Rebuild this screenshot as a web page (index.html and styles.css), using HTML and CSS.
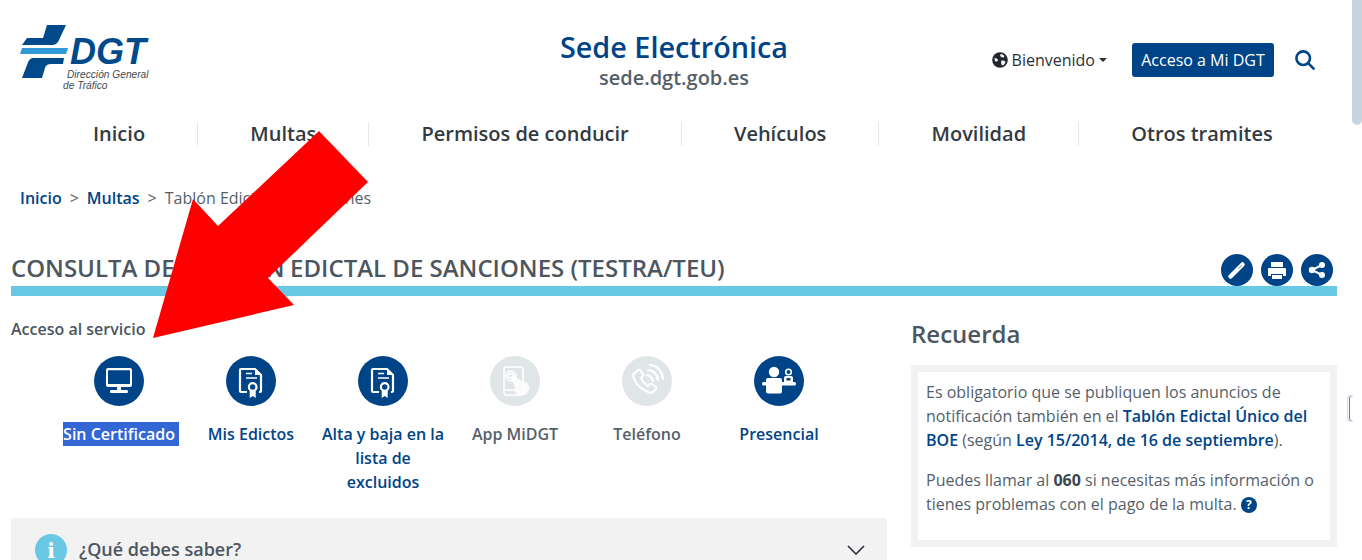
FILE: index.html
```html
<!DOCTYPE html>
<html lang="es">
<head>
<meta charset="utf-8">
<title>Sede Electrónica DGT</title>
<link rel="stylesheet" href="styles.css">
</head>
<body>
<div class="page">
  <header class="top">
    <a class="logo">
      <svg class="logo-mark" viewBox="0 0 50 56" width="50" height="56">
        <path fill="#004a8c" d="M7 13H23L27 0H46L39 15Q37 20 32 20H2Z"/>
        <path fill="#2f9ad6" d="M2 23H48L46 29H0Z"/>
        <path fill="#004a8c" d="M13 33H44L43 39H31Q26 39 25 43L22 53H2L7 40Q9 33 13 33Z"/>
      </svg>
      <span class="logo-text">
        <span class="logo-dgt">DGT</span>
        <span class="logo-sub">Dirección General</span>
        <span class="logo-sub logo-sub2">de Tráfico</span>
      </span>
    </a>
    <div class="site">
      <div class="site-name">Sede Electrónica</div>
      <div class="site-url">sede.dgt.gob.es</div>
    </div>
    <div class="tools">
      <svg class="globe" viewBox="0 0 16 16" width="16" height="16">
        <circle cx="8" cy="8" r="7.8" fill="#22262c"/>
        <path fill="#fff" d="M8 2.6 10.4 2.2 12.4 4 11.6 5.6 9.4 5.2 8.4 4ZM9.4 8.4l2.8.4L13.6 10l-1.8 3-2 .4-.7-2.6ZM2.4 6 4.8 6.4 6 8l-.8 1.6L3 9.2Z"/>
      </svg>
      <span class="welcome">Bienvenido</span><span class="caret"></span>
      <a class="access">Acceso a Mi DGT</a>
      <svg class="search" viewBox="0 0 20 20" width="20" height="20" fill="none" stroke="#004488" stroke-width="2.6" stroke-linecap="round">
        <circle cx="8.2" cy="8.2" r="6.8"/><path d="M13.2 13.2 18.6 18.6"/>
      </svg>
    </div>
  </header>

  <nav class="menu">
    <a class="menu-item">Inicio</a>
    <a class="menu-item">Multas</a>
    <a class="menu-item">Permisos de conducir</a>
    <a class="menu-item">Vehículos</a>
    <a class="menu-item">Movilidad</a>
    <a class="menu-item">Otros tramites</a>
  </nav>

  <div class="crumbs">
    <a class="crumb-link">Inicio</a><span class="crumb-sep">&gt;</span><a class="crumb-link">Multas</a><span class="crumb-sep">&gt;</span><span>Tablón Edictal de Sanciones</span>
  </div>

  <div class="title-row">
    <h1 class="title">Consulta de<span class="title-tight">l Tablón</span> Edictal de Sanciones (TESTRA/TEU)</h1>
    <div class="actions">
      <span class="action"><svg viewBox="0 0 32 32" width="32" height="32"><path d="M9.5 22.5 21.5 10.5" stroke="#fff" stroke-width="4.5" stroke-linecap="round"/><path d="M17 15 21 11" stroke="#7f9fc4" stroke-width="1"/></svg></span>
      <span class="action"><svg viewBox="0 0 32 32" width="32" height="32"><path fill="#fff" d="M10 8h12v5H10ZM8 14h16q1 0 1 1v7h-3v-2H10v2H7v-7q0-1 1-1ZM11 21h10v4H11Z"/></svg></span>
      <span class="action"><svg viewBox="0 0 32 32" width="32" height="32"><path d="M21 11 11 16 21 21" stroke="#fff" stroke-width="2" fill="none"/><circle cx="21" cy="11" r="3" fill="#fff"/><circle cx="11" cy="16" r="3.2" fill="#fff"/><circle cx="21" cy="21" r="3" fill="#fff"/></svg></span>
    </div>
  </div>

  <div class="columns">
    <main class="main">
      <div class="access-title">Acceso al servicio</div>
      <div class="services">
        <a class="service">
          <span class="disc"><svg viewBox="0 0 50 50" width="50" height="50"><path fill="#fff" fill-rule="evenodd" d="M14 12h22q2 0 2 2v15q0 2-2 2H14q-2 0-2-2V14q0-2 2-2Zm0 2.200v13.800h22V14.200ZM23 31h4v3h6q1 0 1 1.500t-1 1.500H17q-1 0-1-1.500t1-1.500h6Z"/></svg></span>
          <span class="service-label"><span class="selected">Sin Certificado</span></span>
        </a>
        <a class="service">
          <span class="disc"><svg viewBox="0 0 50 50" width="50" height="50"><use href="#cert"/></svg></span>
          <span class="service-label">Mis Edictos</span>
        </a>
        <a class="service">
          <span class="disc"><svg viewBox="0 0 50 50" width="50" height="50"><defs><g id="cert"><path fill="none" stroke="#fff" stroke-width="2.200" d="M21 36h-6q-1 0-1-1V14q0-1 1-1h14l6 6v16q0 1-1 1h-1"/><path fill="#fff" d="M29 13l6 6h-6Z"/><path fill="none" stroke="#fff" stroke-width="1.600" d="M20 17.500h6M20 22h11"/><circle cx="26.700" cy="31" r="3.800" fill="none" stroke="#fff" stroke-width="2.200"/><path fill="#fff" d="M23.700 35h6v7l-3-2-3 2Z"/></g></defs><use href="#cert"/></svg></span>
          <span class="service-label">Alta y baja en la lista de excluidos</span>
        </a>
        <a class="service off">
          <span class="disc"><svg viewBox="0 0 50 50" width="50" height="50"><g fill="none" stroke="#fff" stroke-width="1.500"><rect x="14" y="11" width="19" height="28" rx="2.500"/><path d="M14 34h13"/><circle cx="21" cy="20" r="5"/><circle cx="21" cy="20" r="2.500"/></g><path fill="#fff" opacity=".85" d="M21 20 24 19 30 24 37 27 40 32 36 39 29 40 24 35 25 32Z"/></svg></span>
          <span class="service-label">App MiDGT</span>
        </a>
        <a class="service off">
          <span class="disc"><svg viewBox="0 0 50 50" width="50" height="50"><g fill="none" stroke="#fff" stroke-linecap="round"><path stroke-width="2" d="M13 17l3-3q1-1 2 0l3 4q1 1 0 2l-2 2q2 5 7 8l2-2q1-1 2 0l4 3q1 1 0 2l-3 3q-2 1-5 0-12-5-15-16 0-2 2-3Z"/><path stroke-width="2.200" d="M25 19q5 1 6 6M26 14q9 1 10 10M28 9q11 1 13 14"/></g></svg></span>
          <span class="service-label">Teléfono</span>
        </a>
        <a class="service">
          <span class="disc"><svg viewBox="0 0 50 50" width="50" height="50"><g fill="#fff"><circle cx="20" cy="16" r="5.200"/><rect x="12" y="22" width="16" height="15.500" rx="2"/><rect x="8" y="26" width="34" height="3.500" rx="1.500"/><circle cx="34.500" cy="16" r="2.800" fill="none" stroke="#fff" stroke-width="1.600"/><path fill-rule="evenodd" d="M30 26v-4q0-2 2-2h5q2 0 2 2v4ZM32.500 22v2.500h4V22Z"/></g></svg></span>
          <span class="service-label">Presencial</span>
        </a>
      </div>
      <div class="accordion">
        <span class="info">i</span>
        <span class="accordion-title">¿Qué debes saber?</span>
        <svg class="chevron" viewBox="0 0 18 10" width="18" height="10" fill="none" stroke="#2b3038" stroke-width="1.600"><path d="M1 1 9 9 17 1"/></svg>
      </div>
    </main>
    <aside class="aside">
      <h2 class="aside-title">Recuerda</h2>
      <div class="note">
        <p class="note-p">Es obligatorio que se publiquen los anuncios de notificación también en el <b class="link">Tablón Edictal Único del BOE</b> (según <b class="link">Ley 15/2014, de 16 de septiembre</b>).</p>
        <p class="note-p">Puedes llamar al <b class="strong">060</b> si necesitas más información o tienes problemas con el pago de la multa. <span class="help">?</span></p>
      </div>
    </aside>
  </div>

  <svg class="arrow" viewBox="0 0 1362 560" width="1362" height="560"><polygon fill="#ff0000" points="153,338 193,199 218,226 319,131 368,182 268,278 294,305"/></svg>
  <div class="scroll-thumb"></div>
  <div class="side-tab"></div>
</div>
</body>
</html>
```
FILE: styles.css
```css
* { box-sizing: border-box; }
html, body { margin: 0; padding: 0; height: 560px; overflow: hidden; background: #fff; }
body { font-family: "Open Sans", "Noto Sans", sans-serif; font-size: 16px; line-height: 24px; color: #555f6a; }
.page { position: relative; width: 1362px; height: 560px; overflow: hidden; }

.top { display: grid; grid-template-columns: 1fr auto 1fr; align-items: start; width: 1348px; height: 118px; padding: 0 20px; }
.logo { display: flex; align-items: flex-start; margin-top: 25px; }
.logo-mark { flex: none; margin-right: -6px; }
.logo-text { display: block; width: 90px; height: 66px; }
.logo-dgt { display: block; margin: 12px 0 2px 6px; font: italic 700 36px/30px "Liberation Sans", sans-serif; color: #004a8c; }
.logo-sub { display: block; margin-left: 3px; font: italic 400 10.2px/11px "Liberation Sans", sans-serif; color: #444b52; white-space: nowrap; }
.logo-sub2 { margin-left: -1px; }

.site { margin-top: 29px; text-align: center; }
.site-name { font-size: 28.8px; line-height: 36px; font-weight: 600; color: #004488; }
.site-url { font-size: 20px; line-height: 26px; font-weight: 600; color: #555f6a; }

.tools { display: flex; align-items: center; justify-content: flex-end; margin-top: 43px; height: 34px; padding-right: 13px; color: #2b3038; }
.globe { margin-right: 4px; }
.caret { width: 0; height: 0; margin: 0 0 0 4px; border-style: solid; border-width: 4px 4px 0; border-color: #2b3038 transparent transparent; }
.access { display: block; margin: 0 21px 0 25px; width: 142px; height: 34px; line-height: 34px; text-align: center; background: #004488; color: #fff; border-radius: 3px; }

.menu { display: flex; align-items: center; height: 24px; margin: 4px 0 0 40.9px; }
.menu-item { padding: 0 52.1px; font-size: 20px; line-height: 24px; font-weight: 600; color: #333a42; border-right: 1px solid #e8e8e8; white-space: nowrap; }
.menu-item:last-child { border-right: 0; }

.crumbs { margin: 40px 0 0 20px; height: 24px; white-space: nowrap; }
.crumb-link { font-weight: 600; color: #004488; }
.crumb-sep { margin: 0 8px; }

.title-row { display: flex; justify-content: space-between; align-items: flex-end; height: 36px; margin: 40px 25px 0 11px; }
.title { margin: 0 0 2px; font-size: 24px; line-height: 32px; font-weight: 600; color: #4c5660; text-transform: uppercase; white-space: nowrap; }
.title-tight { letter-spacing: -0.75px; }
.actions { display: flex; gap: 8px; margin-right: 4px; }
.action { display: block; width: 32px; height: 32px; border-radius: 50%; background: #004488; }
.action svg { display: block; }

.columns { display: flex; gap: 24px; margin-left: 11px; border-top: 10px solid #69c8e4; width: 1326px; }
.main { width: 876px; flex: none; padding-top: 21px; }
.access-title { font-weight: 600; color: #4c5660; }
.services { display: grid; grid-template-columns: repeat(6, 132px); padding-left: 42px; margin-top: 15px; height: 160px; }
.service { display: flex; flex-direction: column; align-items: center; text-align: center; font-weight: 600; color: #004488; }
.disc { display: block; width: 50px; height: 50px; border-radius: 50%; background: #004488; margin-bottom: 16px; }
.disc svg { display: block; }
.service-label { display: block; width: 132px; padding: 0 5px; }
.selected { display: inline-block; margin-left: 4px; padding: 0 4px 0 0; background: #3367d6; color: #fff; }
.off { color: #555f6a; }
.off .disc { background: #e0e5e7; }

.accordion { display: flex; align-items: flex-start; height: 60px; margin-top: 2px; padding: 16px 22px 0 24px; background: #f2f2f2; border-radius: 3px; }
.info { flex: none; width: 32px; height: 32px; border-radius: 50%; background: #69c8e4; color: #fff; text-align: center; font: 700 20px/34px "DejaVu Serif", serif; }
.accordion-title { flex: 1; margin-left: 12px; font-size: 18px; line-height: 30px; font-weight: 600; color: #4c5660; }
.chevron { margin-top: 11px; }

.aside { width: 426px; flex: none; padding-top: 22px; }
.aside-title { margin: 0 0 15px; font-size: 24px; line-height: 32px; font-weight: 600; color: #4c5660; }
.note { height: 182px; padding: 8px 8px 0; border: 7px solid #f2f2f2; }
.note-p { margin: 0 0 16px; }
.link { font-weight: 600; color: #004488; }
.strong { font-weight: 700; color: #3c4650; }
.help { display: inline-block; width: 16px; height: 16px; border-radius: 50%; background: #004488; color: #fff; font-size: 12px; line-height: 16px; font-weight: 700; text-align: center; vertical-align: 1px; }

.arrow { position: absolute; left: 0; top: 0; pointer-events: none; }
.scroll-thumb { position: absolute; right: 0; top: 0; width: 10px; height: 125px; background: #c8d4de; border-radius: 0 0 5px 5px; }
.side-tab { position: absolute; left: 1347px; top: 395px; width: 6px; height: 27px; background: #fff; border: 1px solid #dcdcdc; border-right: 0; border-radius: 4px 0 0 4px; box-shadow: inset 1px 0 0 #fff, inset 2px 0 0 #4a7fd0; }
```
